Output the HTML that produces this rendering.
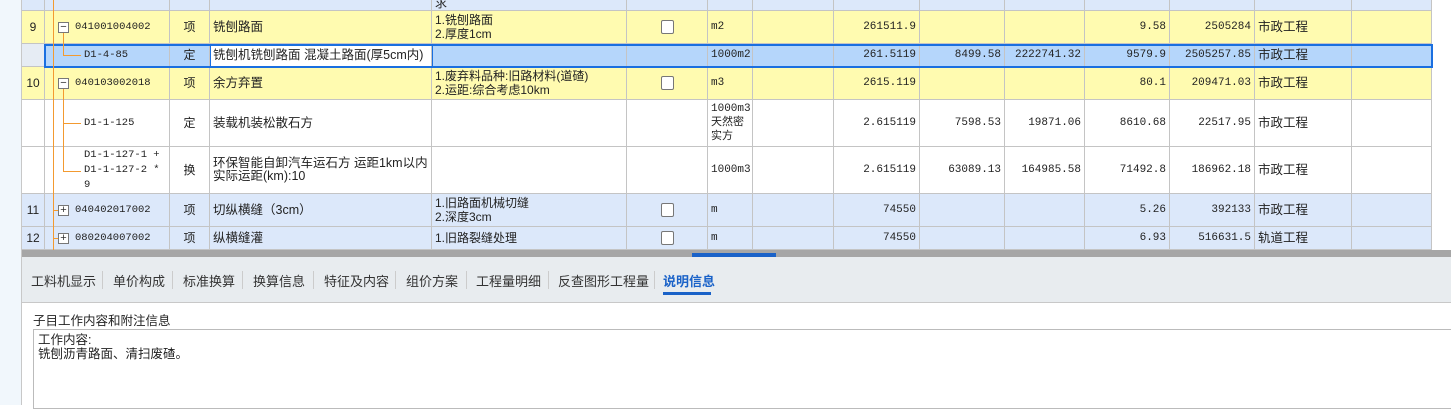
<!DOCTYPE html>
<html><head><meta charset="utf-8"><style>
*{margin:0;padding:0;box-sizing:border-box}
body{width:1451px;height:405px;overflow:hidden;background:#fff;position:relative;font-family:"Liberation Sans","Noto Sans CJK SC",sans-serif;font-size:12px;color:#222}
.strip{position:absolute;left:0;top:0;width:22px;height:405px;background:#f1f7fc;border-right:1px solid #c8c8c8}
.c{position:absolute;border-right:1px solid #c4c4c4;border-bottom:1px solid #c4c4c4;overflow:hidden;white-space:nowrap;line-height:13px;display:flex;align-items:center;padding:0 3px}
.r{justify-content:flex-end}
.mono{font-family:"Liberation Mono","Noto Sans CJK SC",monospace;font-size:11px}
.code{font-family:"Liberation Mono","Noto Sans CJK SC",monospace;font-size:10.5px}
.cb{width:13px;height:14px;border:1px solid #777;border-radius:2px;background:#fff;margin:auto}
.box{position:absolute;width:11px;height:11px;border:1px solid #777;background:#fff;font-size:11px;line-height:9px;text-align:center;color:#333}
.ol{position:absolute;background:#f39a30}
.tab{position:absolute;top:271px;font-size:13px;color:#333}
.sep{position:absolute;top:271px;width:1px;height:18px;background:#ccc}
</style></head><body>
<div class="strip"></div>
<div id="g"></div>
<div style="position:absolute;left:22px;top:250px;width:1429px;height:7px;background:#a6a6a6"></div>
<div style="position:absolute;left:692px;top:253px;width:84px;height:4px;background:#1a62c8"></div>
<div style="position:absolute;left:22px;top:257px;width:1429px;height:46px;background:#e8ecef;border-bottom:1px solid #c8c8c8"></div>
<div class="tab" style="left:31px">工料机显示</div><div class="sep" style="left:102px"></div>
<div class="tab" style="left:113px">单价构成</div><div class="sep" style="left:172px"></div>
<div class="tab" style="left:183px">标准换算</div><div class="sep" style="left:242px"></div>
<div class="tab" style="left:253px">换算信息</div><div class="sep" style="left:313px"></div>
<div class="tab" style="left:324px">特征及内容</div><div class="sep" style="left:395px"></div>
<div class="tab" style="left:406px">组价方案</div><div class="sep" style="left:466px"></div>
<div class="tab" style="left:476px">工程量明细</div><div class="sep" style="left:548px"></div>
<div class="tab" style="left:558px">反查图形工程量</div><div class="sep" style="left:654px"></div>
<div class="tab" style="left:663px;color:#1a62c8;font-weight:bold">说明信息</div>
<div style="position:absolute;left:663px;top:292px;width:48px;height:3px;background:#1a62c8"></div>
<div style="position:absolute;left:33px;top:310px;font-size:12.5px">子目工作内容和附注信息</div>
<div style="position:absolute;left:33px;top:329px;width:1420px;height:80px;border:1px solid #bbb;padding:3px 4px;font-size:12.5px;line-height:14px">工作内容:<br>铣刨沥青路面、清扫废碴。</div>
<script>
var X=[22,45,170,210,432,627,708,753,834,920,1005,1085,1170,1255,1352,1432];
var rows=[
[0,11,'#dce8fa',['','','','','求','','','','','','','','','','']],
[11,44,'#fffbb0',['9','041001004002','项','铣刨路面','1.铣刨路面<br>2.厚度1cm','CB','m2','','261511.9','','','9.58','2505284','市政工程','']],
[44,67,'#b5d6fb',['','D1-4-85','定','铣刨机铣刨路面 混凝土路面(厚5cm内)','','','1000m2','','261.5119','8499.58','2222741.32','9579.9','2505257.85','市政工程','']],
[67,100,'#fffbb0',['10','040103002018','项','余方弃置','1.废弃料品种:旧路材料(道碴)<br>2.运距:综合考虑10km','CB','m3','','2615.119','','','80.1','209471.03','市政工程','']],
[100,147,'#fff',['','D1-1-125','定','装载机装松散石方','','','1000m3<br>天然密<br>实方','','2.615119','7598.53','19871.06','8610.68','22517.95','市政工程','']],
[147,194,'#fff',['','D1-1-127-1 +<br>D1-1-127-2 *<br>9','换','环保智能自卸汽车运石方 运距1km以内<br>实际运距(km):10','','','1000m3','','2.615119','63089.13','164985.58','71492.8','186962.18','市政工程','']],
[194,227,'#dce8fa',['11','040402017002','项','切纵横缝（3cm）','1.旧路面机械切缝<br>2.深度3cm','CB','m','','74550','','','5.26','392133','市政工程','']],
[227,250,'#dce8fa',['12','080204007002','项','纵横缝灌','1.旧路裂缝处理','CB','m','','74550','','','6.93','516631.5','轨道工程','']]];
var h='';
rows.forEach(function(r,ri){
 for(var i=0;i<15;i++){
  var v=r[3][i],cls='c',st='';
  var bg=r[2];
  if(ri==2&&i==0)bg='#e6ecf4';
  if(ri==2&&i==3)bg='#fff';
  if(i>=8&&i<=12)cls+=' r mono';
  if(i==1)cls+=' code';
  if(i==6)cls+=' mono';
  if(i==2||i==0)st='justify-content:center;';
  if(i==1){st+=(ri==0?'':(r[2]=='#fff'||ri==2?'padding-left:39px;':'padding-left:30px;'));}
  if(i==3||i==13)st+='font-size:12.5px;';
  if(i==4||i==6)st+='white-space:normal;line-height:14px;';
  if(ri==0&&i==4)st+='align-items:flex-end;';
  if(ri==5&&i==1)st+='white-space:normal;line-height:15px;';
  if(v=='CB')v='<div class="cb"></div>';
  h+='<div class="'+cls+'" style="'+st+'left:'+X[i]+'px;top:'+r[0]+'px;width:'+(X[i+1]-X[i])+'px;height:'+(r[1]-r[0])+'px;background:'+bg+'">'+v+'</div>';
 }
});
h+='<div style="position:absolute;left:44px;top:44px;width:1389px;height:24px;border:2px solid #1a6fe0"></div>';
h+='<div style="position:absolute;left:210px;top:45px;width:223px;height:22px;border:1.5px solid #1a6fe0"></div>';
h+='<div class="ol" style="left:53px;top:0;width:1px;height:250px"></div>';
h+='<div class="ol" style="left:63px;top:33px;width:1px;height:23px"></div><div class="ol" style="left:63px;top:55px;width:18px;height:1px"></div>';
h+='<div class="ol" style="left:63px;top:89px;width:1px;height:83px"></div><div class="ol" style="left:63px;top:123px;width:18px;height:1px"></div><div class="ol" style="left:63px;top:171px;width:18px;height:1px"></div>';
h+='<div class="ol" style="left:53px;top:210px;width:5px;height:1px"></div><div class="ol" style="left:53px;top:238px;width:5px;height:1px"></div>';
[[22,'−'],[78,'−'],[205,'+'],[233,'+']].forEach(function(b){h+='<div class="box" style="left:58px;top:'+b[0]+'px">'+b[1]+'</div>';});
document.getElementById('g').innerHTML=h;
</script>
</body></html>
